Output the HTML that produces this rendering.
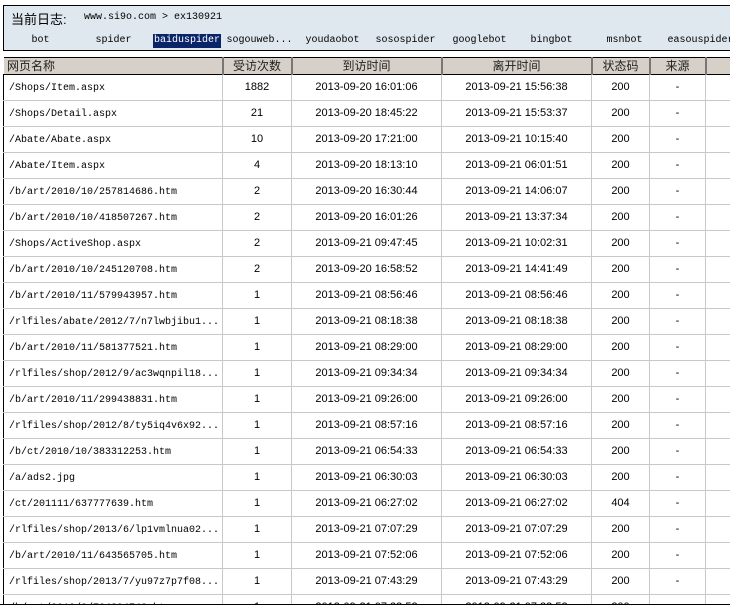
<!DOCTYPE html>
<html><head><meta charset="utf-8"><style>
html,body{margin:0;width:730px;height:608px;overflow:hidden}
body{background:#fff;font-family:"Liberation Mono","Noto Sans CJK SC",monospace;font-size:10px;color:#000;position:relative}
.panel{position:absolute;left:3px;top:5px;width:730px;height:46px;background:#dfe8ee;border:1px solid #000;border-right:none;box-sizing:border-box}
.t1{position:absolute;left:7px;top:3px;font-family:"Liberation Sans","Noto Sans CJK SC",sans-serif;font-size:13px}
.t2{position:absolute;left:80px;top:6px;font-size:10px}
.tab{position:absolute;top:28px;width:73px;text-align:center;height:14px;line-height:14px}
.sel{background:#0a246a;color:#fff;width:68px}
table{position:absolute;left:3px;top:57px;border-collapse:collapse;border:1px solid #000;table-layout:fixed;width:740px}
td,th{padding:0;height:25px;line-height:25px;vertical-align:middle;border-right:1px solid #c8c8c8;border-bottom:1px solid #c8c8c8;white-space:nowrap;overflow:hidden;text-align:center;font-size:11px;font-family:"Liberation Sans",sans-serif}
th{height:16px;line-height:16px;background:#d6d0c8;font-weight:normal;font-family:"Liberation Sans","Noto Sans CJK SC",sans-serif;font-size:12px;border-right:2px solid #777;border-bottom:1px solid #000;border-left:1px solid #fff;color:#222}
td.n{text-align:left;padding-left:5px;padding-top:3px;height:22px;line-height:22px;font-family:"Liberation Mono",monospace;font-size:10px}
</style></head><body>
<div class="panel">
<div class="t1">当前日志:</div>
<div class="t2">www.si9o.com &gt; ex130921</div>
<div class="tab" style="left:0">bot</div>
<div class="tab" style="left:73px">spider</div>
<div class="tab sel" style="left:149px">baiduspider</div>
<div class="tab" style="left:219px">sogouweb...</div>
<div class="tab" style="left:292px">youdaobot</div>
<div class="tab" style="left:365px">sosospider</div>
<div class="tab" style="left:439px">googlebot</div>
<div class="tab" style="left:511px">bingbot</div>
<div class="tab" style="left:584px">msnbot</div>
<div class="tab" style="left:660px">easouspider</div>
</div>
<table>
<colgroup><col style="width:219px"><col style="width:69px"><col style="width:150px"><col style="width:150px"><col style="width:58px"><col style="width:56px"><col style="width:38px"></colgroup>
<tr><th style="text-align:left;padding-left:3px">网页名称</th><th>受访次数</th><th>到访时间</th><th>离开时间</th><th>状态码</th><th>来源</th><th></th></tr>
<tr><td class="n">/Shops/Item.aspx</td><td>1882</td><td>2013-09-20 16:01:06</td><td>2013-09-21 15:56:38</td><td>200</td><td>-</td><td></td></tr>
<tr><td class="n">/Shops/Detail.aspx</td><td>21</td><td>2013-09-20 18:45:22</td><td>2013-09-21 15:53:37</td><td>200</td><td>-</td><td></td></tr>
<tr><td class="n">/Abate/Abate.aspx</td><td>10</td><td>2013-09-20 17:21:00</td><td>2013-09-21 10:15:40</td><td>200</td><td>-</td><td></td></tr>
<tr><td class="n">/Abate/Item.aspx</td><td>4</td><td>2013-09-20 18:13:10</td><td>2013-09-21 06:01:51</td><td>200</td><td>-</td><td></td></tr>
<tr><td class="n">/b/art/2010/10/257814686.htm</td><td>2</td><td>2013-09-20 16:30:44</td><td>2013-09-21 14:06:07</td><td>200</td><td>-</td><td></td></tr>
<tr><td class="n">/b/art/2010/10/418507267.htm</td><td>2</td><td>2013-09-20 16:01:26</td><td>2013-09-21 13:37:34</td><td>200</td><td>-</td><td></td></tr>
<tr><td class="n">/Shops/ActiveShop.aspx</td><td>2</td><td>2013-09-21 09:47:45</td><td>2013-09-21 10:02:31</td><td>200</td><td>-</td><td></td></tr>
<tr><td class="n">/b/art/2010/10/245120708.htm</td><td>2</td><td>2013-09-20 16:58:52</td><td>2013-09-21 14:41:49</td><td>200</td><td>-</td><td></td></tr>
<tr><td class="n">/b/art/2010/11/579943957.htm</td><td>1</td><td>2013-09-21 08:56:46</td><td>2013-09-21 08:56:46</td><td>200</td><td>-</td><td></td></tr>
<tr><td class="n">/rlfiles/abate/2012/7/n7lwbjibu1...</td><td>1</td><td>2013-09-21 08:18:38</td><td>2013-09-21 08:18:38</td><td>200</td><td>-</td><td></td></tr>
<tr><td class="n">/b/art/2010/11/581377521.htm</td><td>1</td><td>2013-09-21 08:29:00</td><td>2013-09-21 08:29:00</td><td>200</td><td>-</td><td></td></tr>
<tr><td class="n">/rlfiles/shop/2012/9/ac3wqnpil18...</td><td>1</td><td>2013-09-21 09:34:34</td><td>2013-09-21 09:34:34</td><td>200</td><td>-</td><td></td></tr>
<tr><td class="n">/b/art/2010/11/299438831.htm</td><td>1</td><td>2013-09-21 09:26:00</td><td>2013-09-21 09:26:00</td><td>200</td><td>-</td><td></td></tr>
<tr><td class="n">/rlfiles/shop/2012/8/ty5iq4v6x92...</td><td>1</td><td>2013-09-21 08:57:16</td><td>2013-09-21 08:57:16</td><td>200</td><td>-</td><td></td></tr>
<tr><td class="n">/b/ct/2010/10/383312253.htm</td><td>1</td><td>2013-09-21 06:54:33</td><td>2013-09-21 06:54:33</td><td>200</td><td>-</td><td></td></tr>
<tr><td class="n">/a/ads2.jpg</td><td>1</td><td>2013-09-21 06:30:03</td><td>2013-09-21 06:30:03</td><td>200</td><td>-</td><td></td></tr>
<tr><td class="n">/ct/201111/637777639.htm</td><td>1</td><td>2013-09-21 06:27:02</td><td>2013-09-21 06:27:02</td><td>404</td><td>-</td><td></td></tr>
<tr><td class="n">/rlfiles/shop/2013/6/lp1vmlnua02...</td><td>1</td><td>2013-09-21 07:07:29</td><td>2013-09-21 07:07:29</td><td>200</td><td>-</td><td></td></tr>
<tr><td class="n">/b/art/2010/11/643565705.htm</td><td>1</td><td>2013-09-21 07:52:06</td><td>2013-09-21 07:52:06</td><td>200</td><td>-</td><td></td></tr>
<tr><td class="n">/rlfiles/shop/2013/7/yu97z7p7f08...</td><td>1</td><td>2013-09-21 07:43:29</td><td>2013-09-21 07:43:29</td><td>200</td><td>-</td><td></td></tr>
<tr><td class="n">/b/art/2010/8/784394748.htm</td><td>1</td><td>2013-09-21 07:33:52</td><td>2013-09-21 07:33:52</td><td>200</td><td>-</td><td></td></tr>
</table>
<div style="position:absolute;left:0;top:604px;width:730px;height:4px;background:#fff;border-top:1px solid #000"></div>
</body></html>
